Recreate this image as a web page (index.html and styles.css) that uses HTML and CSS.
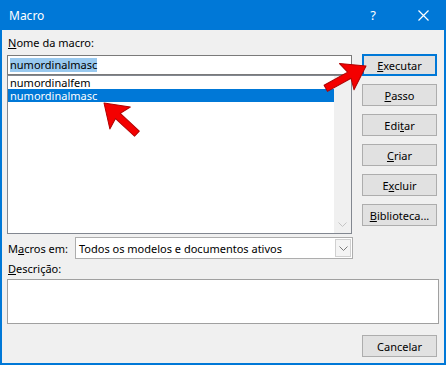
FILE: index.html
```html
<!DOCTYPE html>
<html lang="pt">
<head>
    <meta charset="UTF-8">
    <title>Macro</title>
    <link rel="stylesheet" href="styles.css">
</head>
<body>

<div class="dialog">
    <div class="titlebar">
        <span class="title">Macro</span>
        <span class="help">?</span>
        <span class="close">
            <svg width="11" height="11" viewBox="0 0 11 11"><path d="M0.5 0.5 L10.5 10.5 M10.5 0.5 L0.5 10.5" stroke="#fff" stroke-width="1.2"/></svg>
        </span>
    </div>

    <div class="content">
        <div class="main">
            <div class="left">
                <div class="label"><u>N</u>ome da macro:</div>
                <div class="name-input"><span class="sel">numordinalmasc</span></div>
                <div class="list">
                    <div class="items">
                        <div class="item">numordinalfem</div>
                        <div class="item selected">numordinalmasc</div>
                    </div>
                    <div class="scroll">
                        <svg width="9" height="5" viewBox="0 0 9 5"><path d="M0.5 0.5 L4.5 4.5 L8.5 0.5" fill="none" stroke="#c4c4c4"/></svg>
                    </div>
                </div>
            </div>
            <div class="buttons">
                <button class="btn default"><u>E</u>xecutar</button>
                <button class="btn"><u>P</u>asso</button>
                <button class="btn">Edi<u>t</u>ar</button>
                <button class="btn"><u>C</u>riar</button>
                <button class="btn">E<u>x</u>cluir</button>
                <button class="btn"><u>B</u>iblioteca...</button>
            </div>
        </div>

        <div class="macros-row">
            <span class="row-label">M<u>a</u>cros em:</span>
            <div class="combo">
                <span class="combo-text">Todos os modelos e documentos ativos</span>
                <span class="combo-btn">
                    <svg width="9" height="5" viewBox="0 0 9 5"><path d="M0.5 0.5 L4.5 4.5 L8.5 0.5" fill="none" stroke="#7a7a7a"/></svg>
                </span>
            </div>
        </div>

        <div class="label desc-label"><u>D</u>escrição:</div>
        <div class="desc"></div>

        <div class="footer">
            <button class="btn">Cancelar</button>
        </div>
    </div>

    <!-- red arrows drawn over the dialog -->
    <svg class="arrows" width="446" height="365" viewBox="0 0 446 365">
        <polygon transform="translate(366 66) rotate(-29)" points="0,0 -22,-15 -19,-3.5 -46,-3.5 -46,3.5 -19,3.5 -22,15" fill="#f40000" stroke="#b00000" stroke-width="1" stroke-linejoin="round"/>
        <polygon transform="translate(104 103) rotate(-137)" points="0,0 -22,-15 -19,-3.5 -45,-3.5 -45,3.5 -19,3.5 -22,15" fill="#f40000" stroke="#b00000" stroke-width="1" stroke-linejoin="round"/>
    </svg>
</div>

</body>
</html>
```

FILE: styles.css
```css
body {
    margin: 0;
    padding: 0;
    background-color: #ffffff;
    font-family: "Noto Sans", sans-serif;
    font-size: 11px;
    color: #000;
}
u {
    text-decoration: underline;
    text-underline-offset: 1px;
}
.dialog {
    position: relative;
    width: 446px;
    height: 365px;
    box-sizing: border-box;
    border: 2px solid #0078d7;
    border-top: none;
    background-color: #f0f0f0;
}
.titlebar {
    height: 30px;
    margin: 0 -2px;
    background-color: #0078d7;
    color: #fff;
    display: flex;
    align-items: center;
}
.title {
    font-size: 12px;
    padding-left: 9px;
    flex: 1;
}
.help {
    font-size: 13px;
    width: 20px;
    text-align: center;
    margin-right: 35px;
}
.close {
    display: flex;
    margin-right: 17px;
}
.content {
    padding: 5px 5px 0 5px;
}
.main {
    display: flex;
    gap: 10px;
}
.left {
    width: 345px;
}
.label {
    line-height: 15px;
    margin-bottom: 5px;
    padding-left: 1px;
}
.name-input {
    height: 20px;
    box-sizing: border-box;
    border: 1px solid #7a7a7a;
    background-color: #fff;
    padding-left: 2px;
    display: flex;
    align-items: center;
}
.sel {
    background-color: #99c9ef;
    line-height: 14px;
}
.list {
    height: 159px;
    box-sizing: border-box;
    border: 1px solid #828790;
    background-color: #fff;
    display: flex;
}
.items {
    flex: 1;
}
.item {
    line-height: 13px;
    height: 13px;
    padding-left: 2px;
}
.item.selected {
    background-color: #0078d7;
    color: #fff;
}
.scroll {
    width: 17px;
    background-color: #f0f0f0;
    display: flex;
    align-items: flex-end;
    justify-content: center;
    padding-bottom: 6px;
    box-sizing: border-box;
}
.buttons {
    display: flex;
    flex-direction: column;
    gap: 8px;
    padding-top: 19px;
}
.btn {
    width: 75px;
    height: 22px;
    box-sizing: border-box;
    border: 1px solid #adadad;
    background-color: #e1e1e1;
    font-family: "Noto Sans", sans-serif;
    font-size: 11px;
    color: #000;
    padding: 0;
}
.btn.default {
    border: 2px solid #0078d7;
}
.macros-row {
    display: flex;
    align-items: center;
    margin-top: 3px;
}
.row-label {
    width: 67px;
    padding-left: 1px;
}
.combo {
    width: 278px;
    height: 22px;
    box-sizing: border-box;
    border: 1px solid #adadad;
    background-color: #fff;
    display: flex;
    align-items: center;
}
.combo-text {
    flex: 1;
    padding-left: 3px;
}
.combo-btn {
    width: 16px;
    height: 18px;
    margin-right: 1px;
    box-sizing: border-box;
    border: 1px solid #d0d0d0;
    background-color: #f4f4f4;
    display: flex;
    align-items: center;
    justify-content: center;
}
.desc-label {
    margin-top: 2px;
    margin-bottom: 3px;
}
.desc {
    height: 45px;
    box-sizing: border-box;
    border: 1px solid #a0a0a0;
    background-color: #fff;
}
.footer {
    display: flex;
    justify-content: flex-end;
    padding-right: 2px;
    margin-top: 11px;
}
.arrows {
    position: absolute;
    top: 0;
    left: -2px;
    pointer-events: none;
}
```
